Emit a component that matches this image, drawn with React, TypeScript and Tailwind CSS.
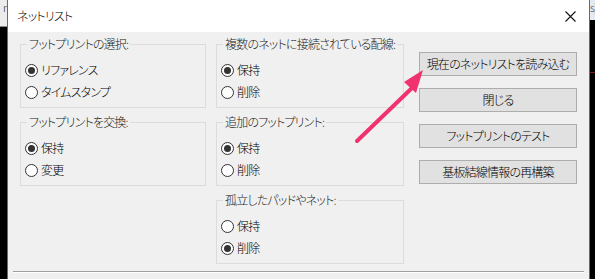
import React from 'react';

const font = "[font-family:'Noto_Sans_CJK_JP','Noto_Sans',sans-serif] [font-feature-settings:'palt'] font-light tracking-[-0.8px]";

function Radio({ label, checked }: { label: string; checked?: boolean }) {
  return (
    <div className="flex h-[22px] items-center pl-[4px]">
      <span className="flex h-[13px] w-[13px] items-center justify-center rounded-full border border-[#333] bg-white">
        {checked && <span className="h-[7px] w-[7px] rounded-full bg-[#333]" />}
      </span>
      <span className="ml-[3px] text-[12px] leading-none text-black">{label}</span>
    </div>
  );
}

function Group({ title, options, selected }: { title: string; options: string[]; selected: number }) {
  return (
    <div className="relative h-[64px] border border-[#dcdcdc] pt-[14px]">
      <span className="absolute -top-[9px] left-[6px] whitespace-nowrap bg-[#f0f0f0] px-[2px] text-[12px] leading-[16px] text-[#222]">
        {title}
      </span>
      {options.map((o, i) => (
        <Radio key={o} label={o} checked={i === selected} />
      ))}
    </div>
  );
}

function Button({ children }: { children: React.ReactNode }) {
  return (
    <button className="h-[24px] w-full whitespace-nowrap border border-[#adadad] bg-[#e1e1e1] text-[12px] leading-none text-black">
      {children}
    </button>
  );
}

export default function App() {
  return (
    <div className={`flex h-[279px] w-[595px] overflow-hidden bg-black ${font}`}>
      {/* desktop behind, left */}
      <div className="flex w-[7px] flex-col">
        <div className="h-[26px] overflow-hidden bg-[#ececec] pl-[3px] text-[11px] leading-[14px] text-[#333]">n</div>
        <div className="h-px bg-[#888]" />
      </div>

      {/* dialog */}
      <div className="relative flex w-[583px] flex-col border-x border-[#1a7fd4] bg-[#f0f0f0]">
        <div className="flex h-[32px] items-center justify-between bg-white pl-[9px] pr-[10px]">
          <span className="text-[12px] text-black">ネットリスト</span>
          <svg width="11" height="11" viewBox="0 0 11 11" className="mr-[3px]">
            <path d="M0.5 0.5 L10.5 10.5 M10.5 0.5 L0.5 10.5" stroke="#111" strokeWidth="1.1" />
          </svg>
        </div>

        <div className="flex pl-[12px] pt-[12px]">
          <div className="flex w-[186px] flex-col gap-[14px]">
            <Group title="フットプリントの選択:" options={['リファレンス', 'タイムスタンプ']} selected={0} />
            <Group title="フットプリントを交換:" options={['保持', '変更']} selected={0} />
          </div>
          <div className="ml-[10px] flex w-[188px] flex-col gap-[14px]">
            <Group title="複数のネットに接続されている配線:" options={['保持', '削除']} selected={0} />
            <Group title="追加のフットプリント:" options={['保持', '削除']} selected={0} />
            <Group title="孤立したパッドやネット:" options={['保持', '削除']} selected={1} />
          </div>
          <div className="ml-[15px] flex w-[158px] flex-col gap-[12px] pt-[8px]">
            <Button>現在のネットリストを読み込む</Button>
            <Button>閉じる</Button>
            <Button>フットプリントのテスト</Button>
            <Button>基板結線情報の再構築</Button>
          </div>
        </div>

        <div className="mx-[5px] mt-[7px] border-t border-b border-t-[#a0a0a0] border-b-white" />

        {/* annotation arrow */}
        <svg className="pointer-events-none absolute left-0 top-0" width="583" height="279">
          <line x1="349" y1="141" x2="405" y2="87" stroke="#f0336f" strokeWidth="4" strokeLinecap="round" />
          <polygon points="415,70 396,82 408,93" fill="#f0336f" />
        </svg>
      </div>

      {/* desktop behind, right */}
      <div className="flex w-[5px] flex-col">
        <div className="h-[20px] overflow-hidden bg-[#e3eaf2] text-[11px] leading-[14px] text-[#333]">s)</div>
        <div className="mt-[52px] h-px bg-[#7a1f1f]" />
      </div>
    </div>
  );
}
